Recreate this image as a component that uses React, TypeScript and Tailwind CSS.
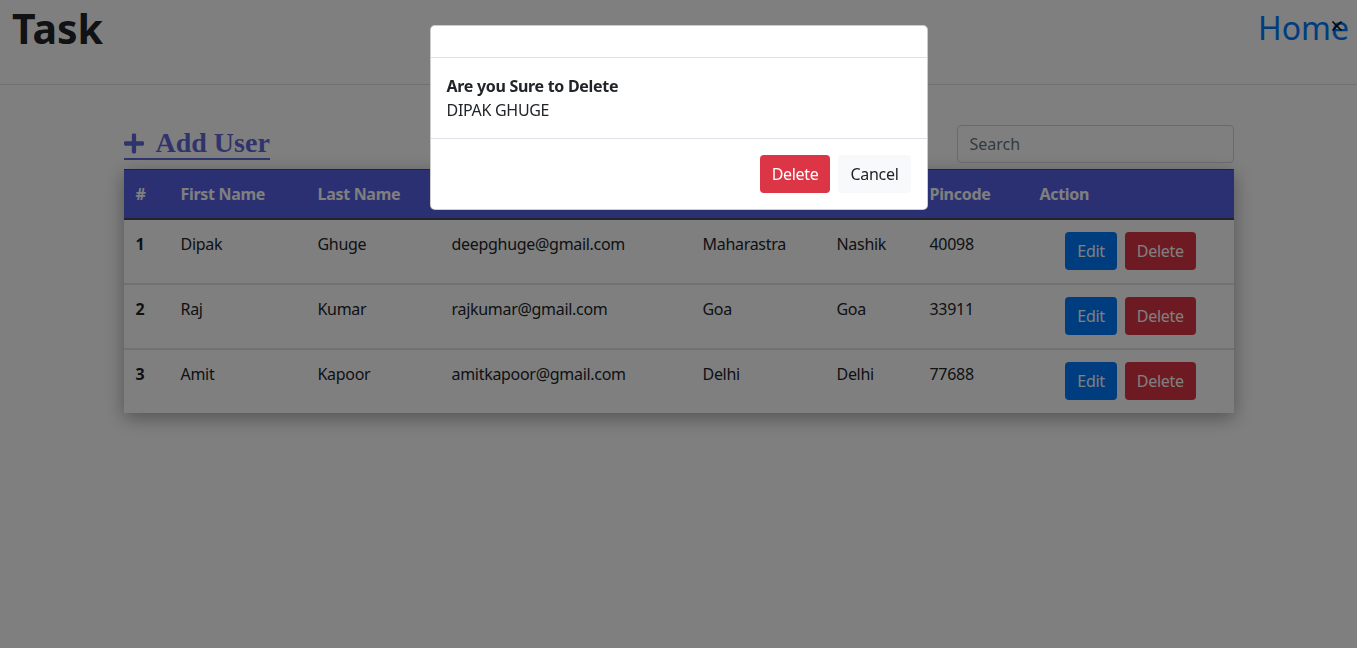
import { X } from "lucide-react";
import { FaPlus } from "react-icons/fa";

const users = [
  { id: 1, first: "Dipak", last: "Ghuge", email: "deepghuge@gmail.com", state: "Maharastra", city: "Nashik", pin: "40098" },
  { id: 2, first: "Raj", last: "Kumar", email: "rajkumar@gmail.com", state: "Goa", city: "Goa", pin: "33911" },
  { id: 3, first: "Amit", last: "Kapoor", email: "amitkapoor@gmail.com", state: "Delhi", city: "Delhi", pin: "77688" },
];

const heads = ["#", "First Name", "Last Name", "Email", "State", "City", "Pincode", "Action"];

const DeleteModal = () => {
  return (
    <div className="fixed inset-0 z-40 flex justify-center bg-black/50 pt-[25px]">
      <div className="h-fit w-[498px] rounded-[5px] border border-black/20 bg-white">
        {/* empty header */}
        <div className="h-[32px] border-b border-[#dee2e6]" />
        <div className="p-4 text-[16px] leading-6 tracking-[-0.3px] text-[#212529]">
          <p className="font-bold">Are you Sure to Delete</p>
          <p>DIPAK GHUGE</p>
        </div>
        <div className="flex justify-end border-t border-[#dee2e6] p-3">
          <button className="m-1 h-[38px] rounded-[4px] bg-[#dc3545] px-3 text-[16px] tracking-[-0.3px] text-white">Delete</button>
          <button className="m-1 h-[38px] rounded-[4px] bg-[#f8f9fa] px-3 text-[16px] tracking-[-0.3px] text-[#212529]">Cancel</button>
        </div>
      </div>
    </div>
  );
};

export default function App() {
  return (
    <div className="relative min-h-screen bg-white font-['Noto_Sans',sans-serif] text-[#212529]">
      <nav className="flex h-[85px] items-start justify-between border-b border-[#dee2e6] px-3">
        <h1 className="pt-[4px] text-[41px] font-bold leading-[48px] text-[#212529]">Task</h1>
        <a className="-mr-[4px] pt-[6px] text-[32px] leading-[44px] text-[#007bff]">Home</a>
      </nav>
      <X className="absolute right-[12px] top-[18px] h-[16px] w-[16px] text-black" strokeWidth={2.5} />

      <div className="mx-auto mt-[40px] w-[1110px]">
        <div className="flex items-end justify-between">
          <a className="mb-[3px] flex items-center gap-[12px] border-b-2 border-[#5f69d8] font-['Liberation_Serif',serif] text-[28px] font-bold leading-[30px] text-[#5f69d8]">
            <FaPlus className="h-[23px] w-[20px]" />
            Add User
          </a>
          <input
            placeholder="Search"
            className="h-[38px] w-[277px] rounded-[4px] border border-[#ced4da] px-3 text-[16px] placeholder:text-[#6c757d]"
          />
        </div>

        <table className="mt-[6px] w-full table-fixed border-collapse text-left text-[16px] tracking-[-0.3px] shadow-[0_5px_18px_rgba(0,0,0,0.35)]">
          <colgroup>
            <col className="w-[45px]" />
            <col className="w-[137px]" />
            <col className="w-[134px]" />
            <col className="w-[251px]" />
            <col className="w-[134px]" />
            <col className="w-[93px]" />
            <col className="w-[110px]" />
            <col className="w-[206px]" />
          </colgroup>
          <thead>
            <tr className="bg-[#5660e4] text-white">
              {heads.map((h) => (
                <th key={h} className="border-t border-b-2 border-[#454d55] px-3 py-3 font-bold leading-6">
                  {h}
                </th>
              ))}
            </tr>
          </thead>
          <tbody className="bg-white">
            {users.map((u) => (
              <tr key={u.id} className="border-t-2 border-[#dee2e6] align-top">
                <td className="px-3 pt-3 font-bold leading-6">{u.id}</td>
                <td className="px-3 pt-3 leading-6">{u.first}</td>
                <td className="px-3 pt-3 leading-6">{u.last}</td>
                <td className="px-3 pt-3 leading-6">{u.email}</td>
                <td className="px-3 pt-3 leading-6">{u.state}</td>
                <td className="px-3 pt-3 leading-6">{u.city}</td>
                <td className="px-3 pt-3 leading-6">{u.pin}</td>
                <td className="px-3 pt-3 pb-[13px] text-center">
                  <button className="mx-1 h-[38px] rounded-[4px] bg-[#007bff] px-3 text-white">Edit</button>
                  <button className="mx-1 h-[38px] rounded-[4px] bg-[#dc3545] px-3 text-white">Delete</button>
                </td>
              </tr>
            ))}
          </tbody>
        </table>
      </div>

      <DeleteModal />
    </div>
  );
}
